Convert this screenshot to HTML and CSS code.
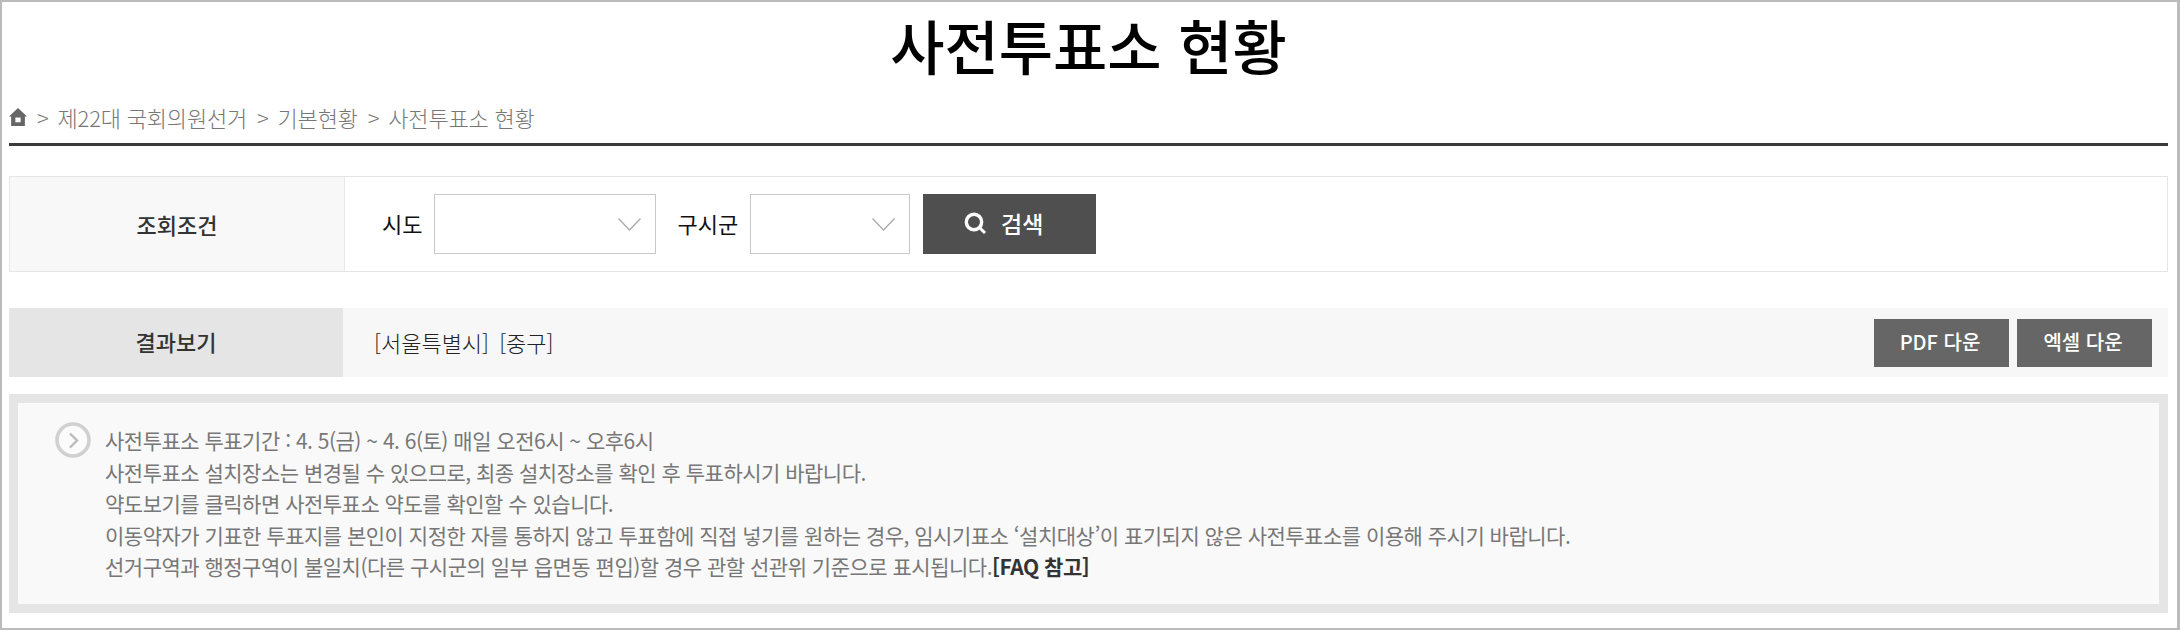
FILE: index.html
```html
<!DOCTYPE html>
<html lang="ko">
<head>
    <meta charset="UTF-8">
    <title>사전투표소 현황</title>
    <link rel="stylesheet" href="styles.css">
</head>
<body>

<div class="frame">
    <h1 class="page-title">사전투표소 현황</h1>

    <div class="breadcrumb">
        <svg class="home-icon" viewBox="0 0 17 17"><path d="M8.5 0 L17 8 L15 8 L15 17 L2 17 L2 8 L0 8 Z M6 9 L6 13.5 L11 13.5 L11 9 Z" fill="#666" fill-rule="evenodd"/></svg>
        <span class="crumb"><span class="crumb-sep">&gt;</span>제22대 국회의원선거</span>
        <span class="crumb"><span class="crumb-sep">&gt;</span>기본현황</span>
        <span class="crumb"><span class="crumb-sep">&gt;</span>사전투표소 현황</span>
    </div>

    <!-- 조회조건 -->
    <div class="search-box">
        <div class="search-label">조회조건</div>
        <div class="search-fields">
            <label class="field-label" for="sido">시도</label>
            <select class="select select-sido" id="sido"><option></option></select>
            <label class="field-label" for="sigungu">구시군</label>
            <select class="select select-gu" id="sigungu"><option></option></select>
            <button class="search-button">
                <svg class="search-icon" viewBox="0 0 23 22"><circle cx="10" cy="10" r="7.7" fill="none" stroke="#fff" stroke-width="3.4"/><path d="M15 15 L21 21" stroke="#fff" stroke-width="3"/></svg>
                검색
            </button>
        </div>
    </div>

    <!-- 결과보기 -->
    <div class="result-box">
        <div class="result-label">결과보기</div>
        <div class="result-text">[서울특별시] [중구]</div>
        <button class="down-button">PDF 다운</button>
        <button class="down-button">엑셀 다운</button>
    </div>

    <div class="notice">
        <svg class="notice-icon" viewBox="0 0 36 36"><circle cx="18" cy="18" r="16" fill="#fbfbfb" stroke="#d0d0d0" stroke-width="3.6"/><path d="M15 11.5 L22 18.5 L15 25.5" fill="none" stroke="#bbb" stroke-width="2.4"/></svg>
        <div class="notice-text">
            <p>사전투표소 투표기간 : 4. 5(금) ~ 4. 6(토) 매일 오전6시 ~ 오후6시</p>
            <p>사전투표소 설치장소는 변경될 수 있으므로, 최종 설치장소를 확인 후 투표하시기 바랍니다.</p>
            <p>약도보기를 클릭하면 사전투표소 약도를 확인할 수 있습니다.</p>
            <p>이동약자가 기표한 투표지를 본인이 지정한 자를 통하지 않고 투표함에 직접 넣기를 원하는 경우, 임시기표소 ‘설치대상’이 표기되지 않은 사전투표소를 이용해 주시기 바랍니다.</p>
            <p>선거구역과 행정구역이 불일치(다른 구시군의 일부 읍면동 편입)할 경우 관할 선관위 기준으로 표시됩니다.<strong class="faq">[FAQ 참고]</strong></p>
        </div>
    </div>
</div>

</body>
</html>
```

FILE: styles.css
```css
* {
    box-sizing: border-box;
}
body {
    margin: 0;
    font-family: "Noto Sans CJK KR", "Noto Sans", sans-serif;
    background-color: #fff;
}
.frame {
    height: 630px;
    border: solid #bbb;
    border-width: 2px 3px 2px 2px;
    padding: 0 9px 0 7px;
    overflow: hidden;
}
.page-title {
    margin: 0;
    height: 88px;
    line-height: 86px;
    font-size: 59px;
    font-weight: 500;
    color: #000;
    text-align: center;
}
.breadcrumb {
    display: flex;
    align-items: center;
    gap: 10px;
    height: 56px;
    border-bottom: 3px solid #3a3a3a;
    font-size: 22px;
    font-weight: 300;
    color: #777;
    letter-spacing: -0.2px;
}
.crumb-sep {
    margin-right: 9px;
}
.home-icon {
    width: 18px;
    height: 18px;
    margin-top: 1px;
}

/* search */
.search-box {
    display: flex;
    height: 96px;
    margin-top: 30px;
    border: 1px solid #e5e5e5;
}
.search-label {
    width: 335px;
    padding-bottom: 1px;
    background-color: #f8f8f8;
    border-right: 1px solid #e8e8e8;
    display: flex;
    align-items: center;
    justify-content: center;
    font-size: 22px;
    font-weight: 500;
    color: #333;
}
.search-fields {
    display: flex;
    align-items: center;
    padding-left: 37px;
    font-size: 22px;
}
.field-label {
    padding-bottom: 2px;
    color: #111;
    margin-right: 12px;
}
.select {
    appearance: none;
    height: 60px;
    border: 1px solid #c8c8c8;
    border-radius: 0;
    background: #fff url("data:image/svg+xml,%3Csvg xmlns='http://www.w3.org/2000/svg' width='23' height='13'%3E%3Cpath d='M0.5 0.5 L11.5 12 L22.5 0.5' fill='none' stroke='%23aaa' stroke-width='1.3'/%3E%3C/svg%3E") no-repeat right 14px center;
    margin-right: 21px;
}
.select-sido {
    width: 222px;
}
.select-gu {
    width: 160px;
    margin-right: 13px;
}
.search-button {
    display: flex;
    align-items: center;
    justify-content: center;
    gap: 14px;
    width: 173px;
    height: 60px;
    padding: 0 12px 3px 0;
    background-color: #4f4f4f;
    border: none;
    color: #fff;
    font-family: inherit;
    font-size: 23px;
    font-weight: 500;
}
.search-icon {
    width: 23px;
    height: 22px;
}

/* result */
.result-box {
    display: flex;
    align-items: center;
    height: 69px;
    margin-top: 36px;
    padding-right: 16px;
    background-color: #f7f7f7;
}
.result-label {
    width: 334px;
    height: 100%;
    padding-bottom: 3px;
    background-color: #e5e5e5;
    display: flex;
    align-items: center;
    justify-content: center;
    font-size: 22px;
    font-weight: 500;
    color: #333;
}
.result-text {
    flex: 1;
    padding: 0 0 2px 31px;
    font-size: 22px;
    font-weight: 300;
    color: #222;
    word-spacing: 4px;
}
.down-button {
    width: 135px;
    height: 48px;
    margin-left: 8px;
    padding: 0 3px 2px 0;
    background-color: #666;
    border: none;
    color: #fff;
    font-family: inherit;
    font-size: 20px;
    font-weight: 500;
}

/* notice */
.notice {
    display: flex;
    align-items: flex-start;
    height: 219px;
    margin-top: 17px;
    padding: 19px 0 0 37px;
    background-color: #f9f9f9;
    border: 9px solid #e5e5e5;
}
.notice-icon {
    width: 36px;
    height: 36px;
    flex-shrink: 0;
    margin-right: 14px;
}
.notice-text {
    margin-top: 3px;
    font-size: 21px;
    line-height: 31.5px;
    color: #777;
    letter-spacing: -0.5px;
}
.notice-text p {
    margin: 0;
}
.faq {
    color: #333;
}
```
